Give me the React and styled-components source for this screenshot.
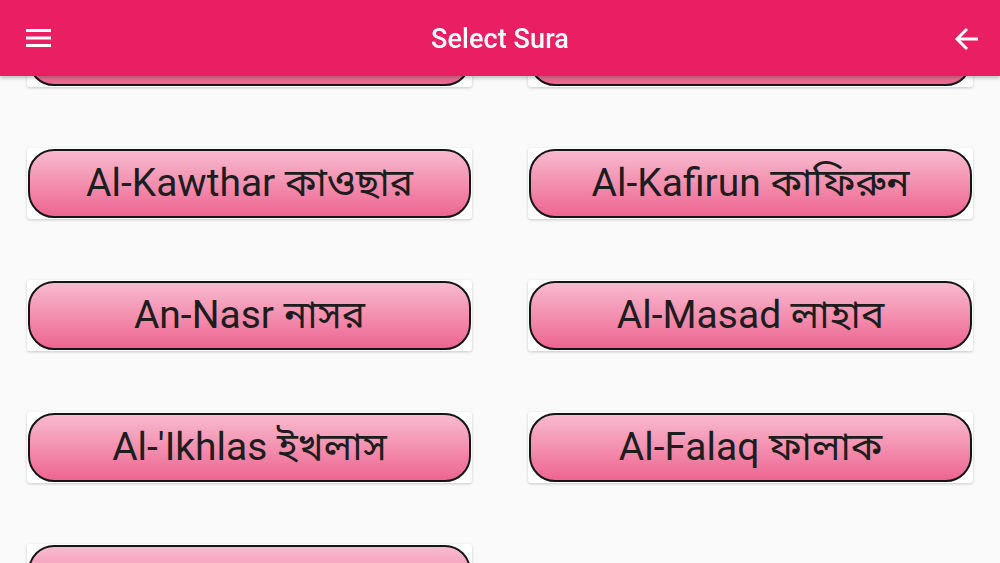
import React from 'react';
import styled, { createGlobalStyle } from 'styled-components';

const GlobalStyle = createGlobalStyle`
  html, body {
    margin: 0;
    padding: 0;
    background: #fafafa;
    font-family: Roboto, "Noto Sans", "Noto Sans Bengali", sans-serif;
    overflow: hidden;
  }
`;

const Page = styled.div`
  width: 1000px;
  height: 563px;
  overflow: hidden;
  background: #fafafa;
`;

const AppBar = styled.header`
  position: fixed;
  top: 0;
  left: 0;
  right: 0;
  height: 76px;
  background-color: #e91e63;
  box-shadow: 0 2px 4px rgba(0, 0, 0, 0.25);
  display: flex;
  align-items: center;
  justify-content: space-between;
  padding: 1px 20px 0 26px;
  box-sizing: border-box;
  z-index: 10;
`;

const IconButton = styled.button`
  background: none;
  border: none;
  padding: 0;
  width: 26px;
  height: 26px;
  display: flex;
  align-items: center;
  justify-content: center;
  color: #fff;
  cursor: pointer;
`;

const Title = styled.h1`
  margin: 0 0 0 -6px;
  font-family: Roboto, "Noto Sans", sans-serif;
  font-weight: 500;
  font-size: 27px;
  letter-spacing: 0.1px;
  color: #fff;
`;

const Grid = styled.div`
  display: grid;
  grid-template-columns: 445px 445px;
  column-gap: 56px;
  row-gap: 61px;
  padding: 16px 27px 0;
`;

const Card = styled.div`
  height: 71px;
  background: #fff;
  border-radius: 3px;
  box-shadow: 0 1px 3px rgba(0, 0, 0, 0.2);
  padding: 1px;
  box-sizing: border-box;
`;

const SuraButton = styled.button`
  width: 100%;
  height: 100%;
  border: 2px solid #151515;
  border-radius: 26px;
  background: linear-gradient(to bottom, #f8bacf, #ed6590);
  font-family: Roboto, "Noto Sans", "Noto Sans Bengali", sans-serif;
  font-size: 39px;
  color: #1d1d1d;
  cursor: pointer;
  padding: 5px 0 0;
  display: flex;
  align-items: center;
  justify-content: center;
  white-space: nowrap;
`;

const suras = [
  'Quraysh কুরাইশ',
  "Al-Ma'un মাউন",
  'Al-Kawthar কাওছার',
  'Al-Kafirun কাফিরুন',
  'An-Nasr নাসর',
  'Al-Masad লাহাব',
  "Al-'Ikhlas ইখলাস",
  'Al-Falaq ফালাক',
  'An-Nas নাস',
];

const MenuIcon = () => (
  <svg width="26" height="26" viewBox="0 0 26 26">
    <rect x="0" y="3" width="25" height="3" fill="currentColor" />
    <rect x="0" y="10.5" width="25" height="3" fill="currentColor" />
    <rect x="0" y="18" width="25" height="3" fill="currentColor" />
  </svg>
);

const BackIcon = () => (
  <svg width="26" height="26" viewBox="0 0 26 26" fill="none" stroke="currentColor" strokeWidth="3">
    <path d="M24 13H3" />
    <path d="M13 3L3 13l10 10" />
  </svg>
);

const App = () => {
  return (
    <Page>
      <GlobalStyle />
      <AppBar>
        <IconButton title="Menu">
          <MenuIcon />
        </IconButton>
        <Title>Select Sura</Title>
        <IconButton title="Back">
          <BackIcon />
        </IconButton>
      </AppBar>
      <Grid>
        {suras.map((name) => (
          <Card key={name}>
            <SuraButton>{name}</SuraButton>
          </Card>
        ))}
      </Grid>
    </Page>
  );
};

export default App;
